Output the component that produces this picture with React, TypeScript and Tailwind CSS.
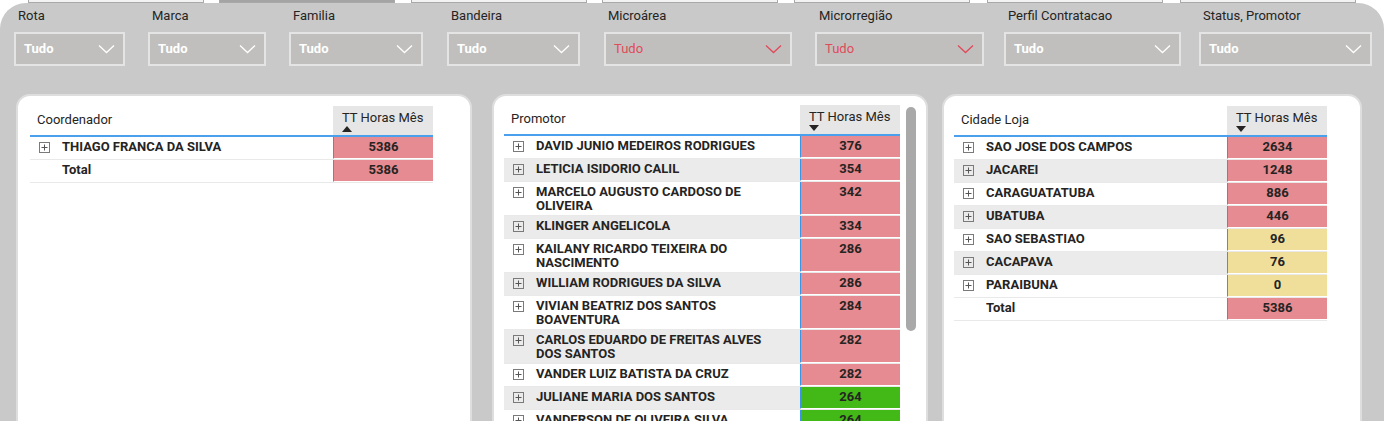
const FONT = { fontFamily: "Roboto, 'Liberation Sans', sans-serif" };

type Tone = "pink" | "yellow" | "green";

const toneClass: Record<Tone, string> = {
    pink: "bg-[#e68b91]",
    yellow: "bg-[#f0df9b]",
    green: "bg-[#43b918]",
};

const slicers = [
    { label: "Rota", box: "w-[111px]", ml: "ml-0", red: false },
    { label: "Marca", box: "w-[118px]", ml: "ml-[23px]", red: false },
    { label: "Familia", box: "w-[134px]", ml: "ml-[23px]", red: false },
    { label: "Bandeira", box: "w-[133px]", ml: "ml-[24px]", red: false },
    { label: "Microárea", box: "w-[188px]", ml: "ml-[24px]", red: true },
    { label: "Microrregião", box: "w-[169px]", ml: "ml-[23px]", red: true },
    { label: "Perfil Contratacao", box: "w-[177px]", ml: "ml-[20px]", red: false },
    { label: "Status, Promotor", box: "w-[173px]", ml: "ml-[18px]", red: false },
];

const tabs = [
    { ml: "ml-[28px]", dark: false },
    { ml: "ml-[15px]", dark: true },
    { ml: "ml-[16px]", dark: false },
    { ml: "ml-[15px]", dark: false },
    { ml: "ml-[16px]", dark: false },
    { ml: "ml-[17px]", dark: false },
    { ml: "ml-[17px]", dark: false },
];

function Chevron({ red }: { red: boolean }) {
    return (
        <svg width="17" height="10" viewBox="0 0 17 10" className="mr-[8px]">
            <path d="M1 1.5 L8.5 8.5 L16 1.5" fill="none" stroke={red ? "#e04a5b" : "#ffffff"} strokeWidth="1.3" />
        </svg>
    );
}

function PlusBox() {
    return (
        <svg width="11" height="11" viewBox="0 0 11 11" className="shrink-0">
            <rect x="0.5" y="0.5" width="10" height="10" fill="none" stroke="#7a7a7a" />
            <path d="M5.5 2.5 V8.5 M2.5 5.5 H8.5" stroke="#555" strokeWidth="1" />
        </svg>
    );
}

function SortArrow({ up }: { up: boolean }) {
    return (
        <svg width="10" height="6" viewBox="0 0 10 6">
            <path d={up ? "M0 6 L5 0 L10 6 Z" : "M0 0 L5 6 L10 0 Z"} fill="#252423" />
        </svg>
    );
}

type Row = { name: string[]; value: string; tone: Tone; total?: boolean };

function Table({ title, up, rows, striped }: { title: string; up: boolean; rows: Row[]; striped: boolean }) {
    return (
        <div className="flex flex-col w-full">
            <div className="flex h-[29px]">
                <div className="flex-1 pl-[7px] pt-[4px] text-[13px] text-[#252423]">{title}</div>
                <div className="w-[100px] bg-[#e6e6e6] pl-[9px] pt-[4px] text-[13px] leading-[16px] text-[#252423]">
                    <div>TT Horas Mês</div>
                    <SortArrow up={up} />
                </div>
            </div>
            <div className="h-[2px] bg-[#4aa0ec]" />
            {rows.map((r, i) => (
                <div
                    key={i}
                    className={`flex min-h-[23px] border-b border-[#e9e9e9] ${striped && !r.total && i % 2 === 1 ? "bg-[#ebebeb]" : "bg-white"}`}
                >
                    <div className="flex-1 flex items-start pl-[9px] pt-[3px] pb-[2px]">
                        <div className="w-[23px] pt-[2px]">{!r.total && <PlusBox />}</div>
                        <div className="text-[13px] leading-[14px] font-bold text-[#252423]">
                            {r.name.map((n, j) => (
                                <div key={j}>{n}</div>
                            ))}
                        </div>
                    </div>
                    <div
                        className={`w-[100px] border-l border-[#3b94e4] border-b border-b-white text-center pt-[3px] text-[13px] leading-[14px] font-bold text-[#252423] ${toneClass[r.tone]}`}
                    >
                        {r.value}
                    </div>
                </div>
            ))}
        </div>
    );
}

const coord: Row[] = [
    { name: ["THIAGO FRANCA DA SILVA"], value: "5386", tone: "pink" },
    { name: ["Total"], value: "5386", tone: "pink", total: true },
];

const promot: Row[] = [
    { name: ["DAVID JUNIO MEDEIROS RODRIGUES"], value: "376", tone: "pink" },
    { name: ["LETICIA ISIDORIO CALIL"], value: "354", tone: "pink" },
    { name: ["MARCELO AUGUSTO CARDOSO DE", "OLIVEIRA"], value: "342", tone: "pink" },
    { name: ["KLINGER ANGELICOLA"], value: "334", tone: "pink" },
    { name: ["KAILANY RICARDO TEIXEIRA DO", "NASCIMENTO"], value: "286", tone: "pink" },
    { name: ["WILLIAM RODRIGUES DA SILVA"], value: "286", tone: "pink" },
    { name: ["VIVIAN BEATRIZ DOS SANTOS", "BOAVENTURA"], value: "284", tone: "pink" },
    { name: ["CARLOS EDUARDO DE FREITAS ALVES", "DOS SANTOS"], value: "282", tone: "pink" },
    { name: ["VANDER LUIZ BATISTA DA CRUZ"], value: "282", tone: "pink" },
    { name: ["JULIANE MARIA DOS SANTOS"], value: "264", tone: "green" },
    { name: ["VANDERSON DE OLIVEIRA SILVA"], value: "264", tone: "green" },
];

const cidades: Row[] = [
    { name: ["SAO JOSE DOS CAMPOS"], value: "2634", tone: "pink" },
    { name: ["JACAREI"], value: "1248", tone: "pink" },
    { name: ["CARAGUATATUBA"], value: "886", tone: "pink" },
    { name: ["UBATUBA"], value: "446", tone: "pink" },
    { name: ["SAO SEBASTIAO"], value: "96", tone: "yellow" },
    { name: ["CACAPAVA"], value: "76", tone: "yellow" },
    { name: ["PARAIBUNA"], value: "0", tone: "yellow" },
    { name: ["Total"], value: "5386", tone: "pink", total: true },
];

export default function App() {
    return (
        <div className="w-[1386px] h-[421px] overflow-hidden bg-white" style={FONT}>
            <div className="flex h-[3px]">
                {tabs.map((t, i) => (
                    <div
                        key={i}
                        className={`${t.ml} w-[176px] h-[3px] border-x border-b border-[#a9a9a9] ${t.dark ? "bg-[#a4a4a4]" : "bg-[#f3f3f3]"}`}
                    />
                ))}
            </div>
            <div className="w-[1384px] h-[418px] bg-[#c9c9c9] rounded-t-[26px] flex flex-col">
                <div className="flex pl-[14px] pt-[5px]">
                    {slicers.map((s) => (
                        <div key={s.label} className={`${s.ml} flex flex-col`}>
                            <div className="pl-[4px] h-[24px] text-[13px] leading-[16px] text-[#252423]">{s.label}</div>
                            <div
                                className={`${s.box} h-[34px] bg-[#c1bfbd] border-2 border-[#e4e4e4] flex items-center justify-between pl-[8px]`}
                            >
                                <span
                                    className={`text-[13px] ${s.red ? "text-[#e04a5b]" : "text-white font-bold"}`}
                                >
                                    Tudo
                                </span>
                                <Chevron red={s.red} />
                            </div>
                        </div>
                    ))}
                </div>
                <div className="flex pl-[16px] pt-[28px] flex-1 min-h-0">
                    <div className="w-[456px] h-[400px] bg-white border-2 border-[#dedede] rounded-[14px] pl-[12px] pt-[10px]">
                        <div className="w-[403px]">
                            <Table title="Coordenador" up={true} rows={coord} striped={false} />
                        </div>
                    </div>
                    <div className="ml-[20px] w-[436px] h-[400px] bg-white border-2 border-[#dedede] rounded-[14px] pl-[10px] pt-[9px] flex">
                        <div className="w-[396px]">
                            <Table title="Promotor" up={false} rows={promot} striped={true} />
                        </div>
                        <div className="ml-[6px] mt-[2px] w-[10px] h-[224px] rounded-full bg-[#a9a9a9]" />
                    </div>
                    <div className="ml-[14px] w-[420px] h-[400px] bg-white border-2 border-[#dedede] rounded-[14px] pl-[10px] pt-[10px]">
                        <div className="w-[373px]">
                            <Table title="Cidade Loja" up={false} rows={cidades} striped={true} />
                        </div>
                    </div>
                </div>
            </div>
        </div>
    );
}
